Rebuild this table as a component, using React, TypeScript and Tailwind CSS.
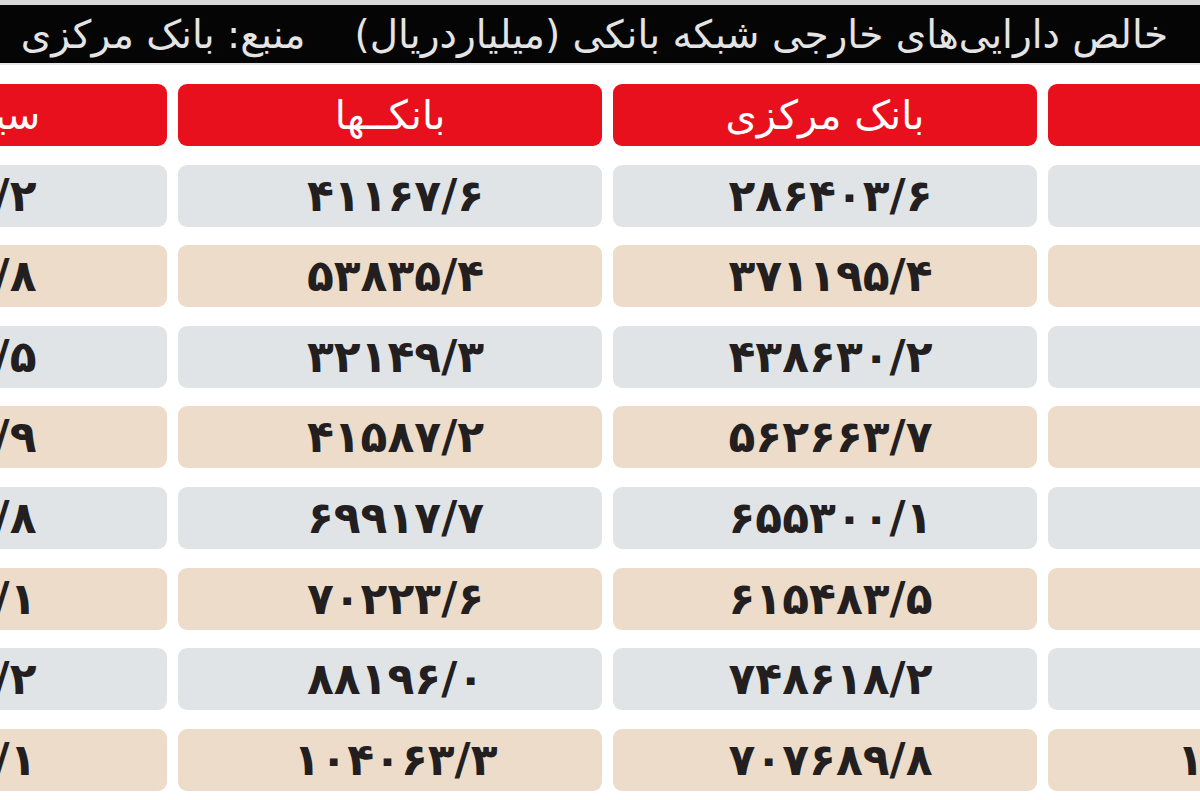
import React from "react";

const rows = [
  { year: "۱۳۸۹", total: "۳۲۷۵۷۱/۲", banks: "۴۱۱۶۷/۶", central: "۲۸۶۴۰۳/۶" },
  { year: "۱۳۹۰", total: "۴۲۵۰۳۰/۸", banks: "۵۳۸۳۵/۴", central: "۳۷۱۱۹۵/۴" },
  { year: "۱۳۹۱", total: "۴۷۰۷۷۹/۵", banks: "۳۲۱۴۹/۳", central: "۴۳۸۶۳۰/۲" },
  { year: "۱۳۹۲", total: "۶۰۴۲۵۰/۹", banks: "۴۱۵۸۷/۲", central: "۵۶۲۶۶۳/۷" },
  { year: "۱۳۹۳", total: "۷۲۵۲۱۷/۸", banks: "۶۹۹۱۷/۷", central: "۶۵۵۳۰۰/۱" },
  { year: "۱۳۹۴", total: "۶۸۵۷۰۷/۱", banks: "۷۰۲۲۳/۶", central: "۶۱۵۴۸۳/۵" },
  { year: "۱۳۹۵", total: "۸۳۶۸۱۴/۲", banks: "۸۸۱۹۶/۰", central: "۷۴۸۶۱۸/۲" },
  { year: "۱۳۹۶/۰۹", total: "۸۱۱۷۵۳/۱", banks: "۱۰۴۰۶۳/۳", central: "۷۰۷۶۸۹/۸" },
];

const font = { fontFamily: '"DejaVu Sans", sans-serif' };

export default function App() {
  return (
    <div
      className="w-[1200px] h-[800px] overflow-hidden bg-white relative"
      style={font}
    >
      <div className="h-[5px] bg-[#d9d9d9]" />
      <div
        dir="rtl"
        className="h-[58px] bg-[#050505] flex items-center pr-[32px] gap-[49px] text-[#e4e4e4] text-[39px] leading-none whitespace-nowrap"
      >
        <span>خالص دارایی‌های خارجی شبکه بانکی (میلیاردریال)</span>
        <span>منبع: بانک مرکزی</span>
      </div>
      <div className="h-[2px] bg-[#e6e6e6]" />
      <div
        dir="rtl"
        className="mt-[19px] ml-[-309px] w-[1781px] grid grid-cols-[424px_424px_424px_476px] gap-x-[11px] gap-y-[18.6px]"
      >
        {["سال", "بانک مرکزی", "بانکــها", "سیستم بانکی"].map((h) => (
          <div
            key={h}
            className="h-[62px] rounded-[9px] bg-[#e8101c] flex items-center justify-center text-white text-[40px] leading-none whitespace-nowrap"
          >
            {h}
          </div>
        ))}
        {rows.map((r, i) => {
          const bg = i % 2 === 0 ? "bg-[#e1e4e7]" : "bg-[#ecdcc9]";
          return (
            <React.Fragment key={i}>
              {[r.year, r.central, r.banks, r.total].map((v, j) => (
                <div
                  key={j}
                  className={`h-[62px] rounded-[9px] ${bg} flex items-center justify-center pl-[11px] text-[#231f20] text-[44px] tracking-[11px] font-bold leading-none whitespace-nowrap`}
                >
                  {v}
                </div>
              ))}
            </React.Fragment>
          );
        })}
      </div>
    </div>
  );
}
